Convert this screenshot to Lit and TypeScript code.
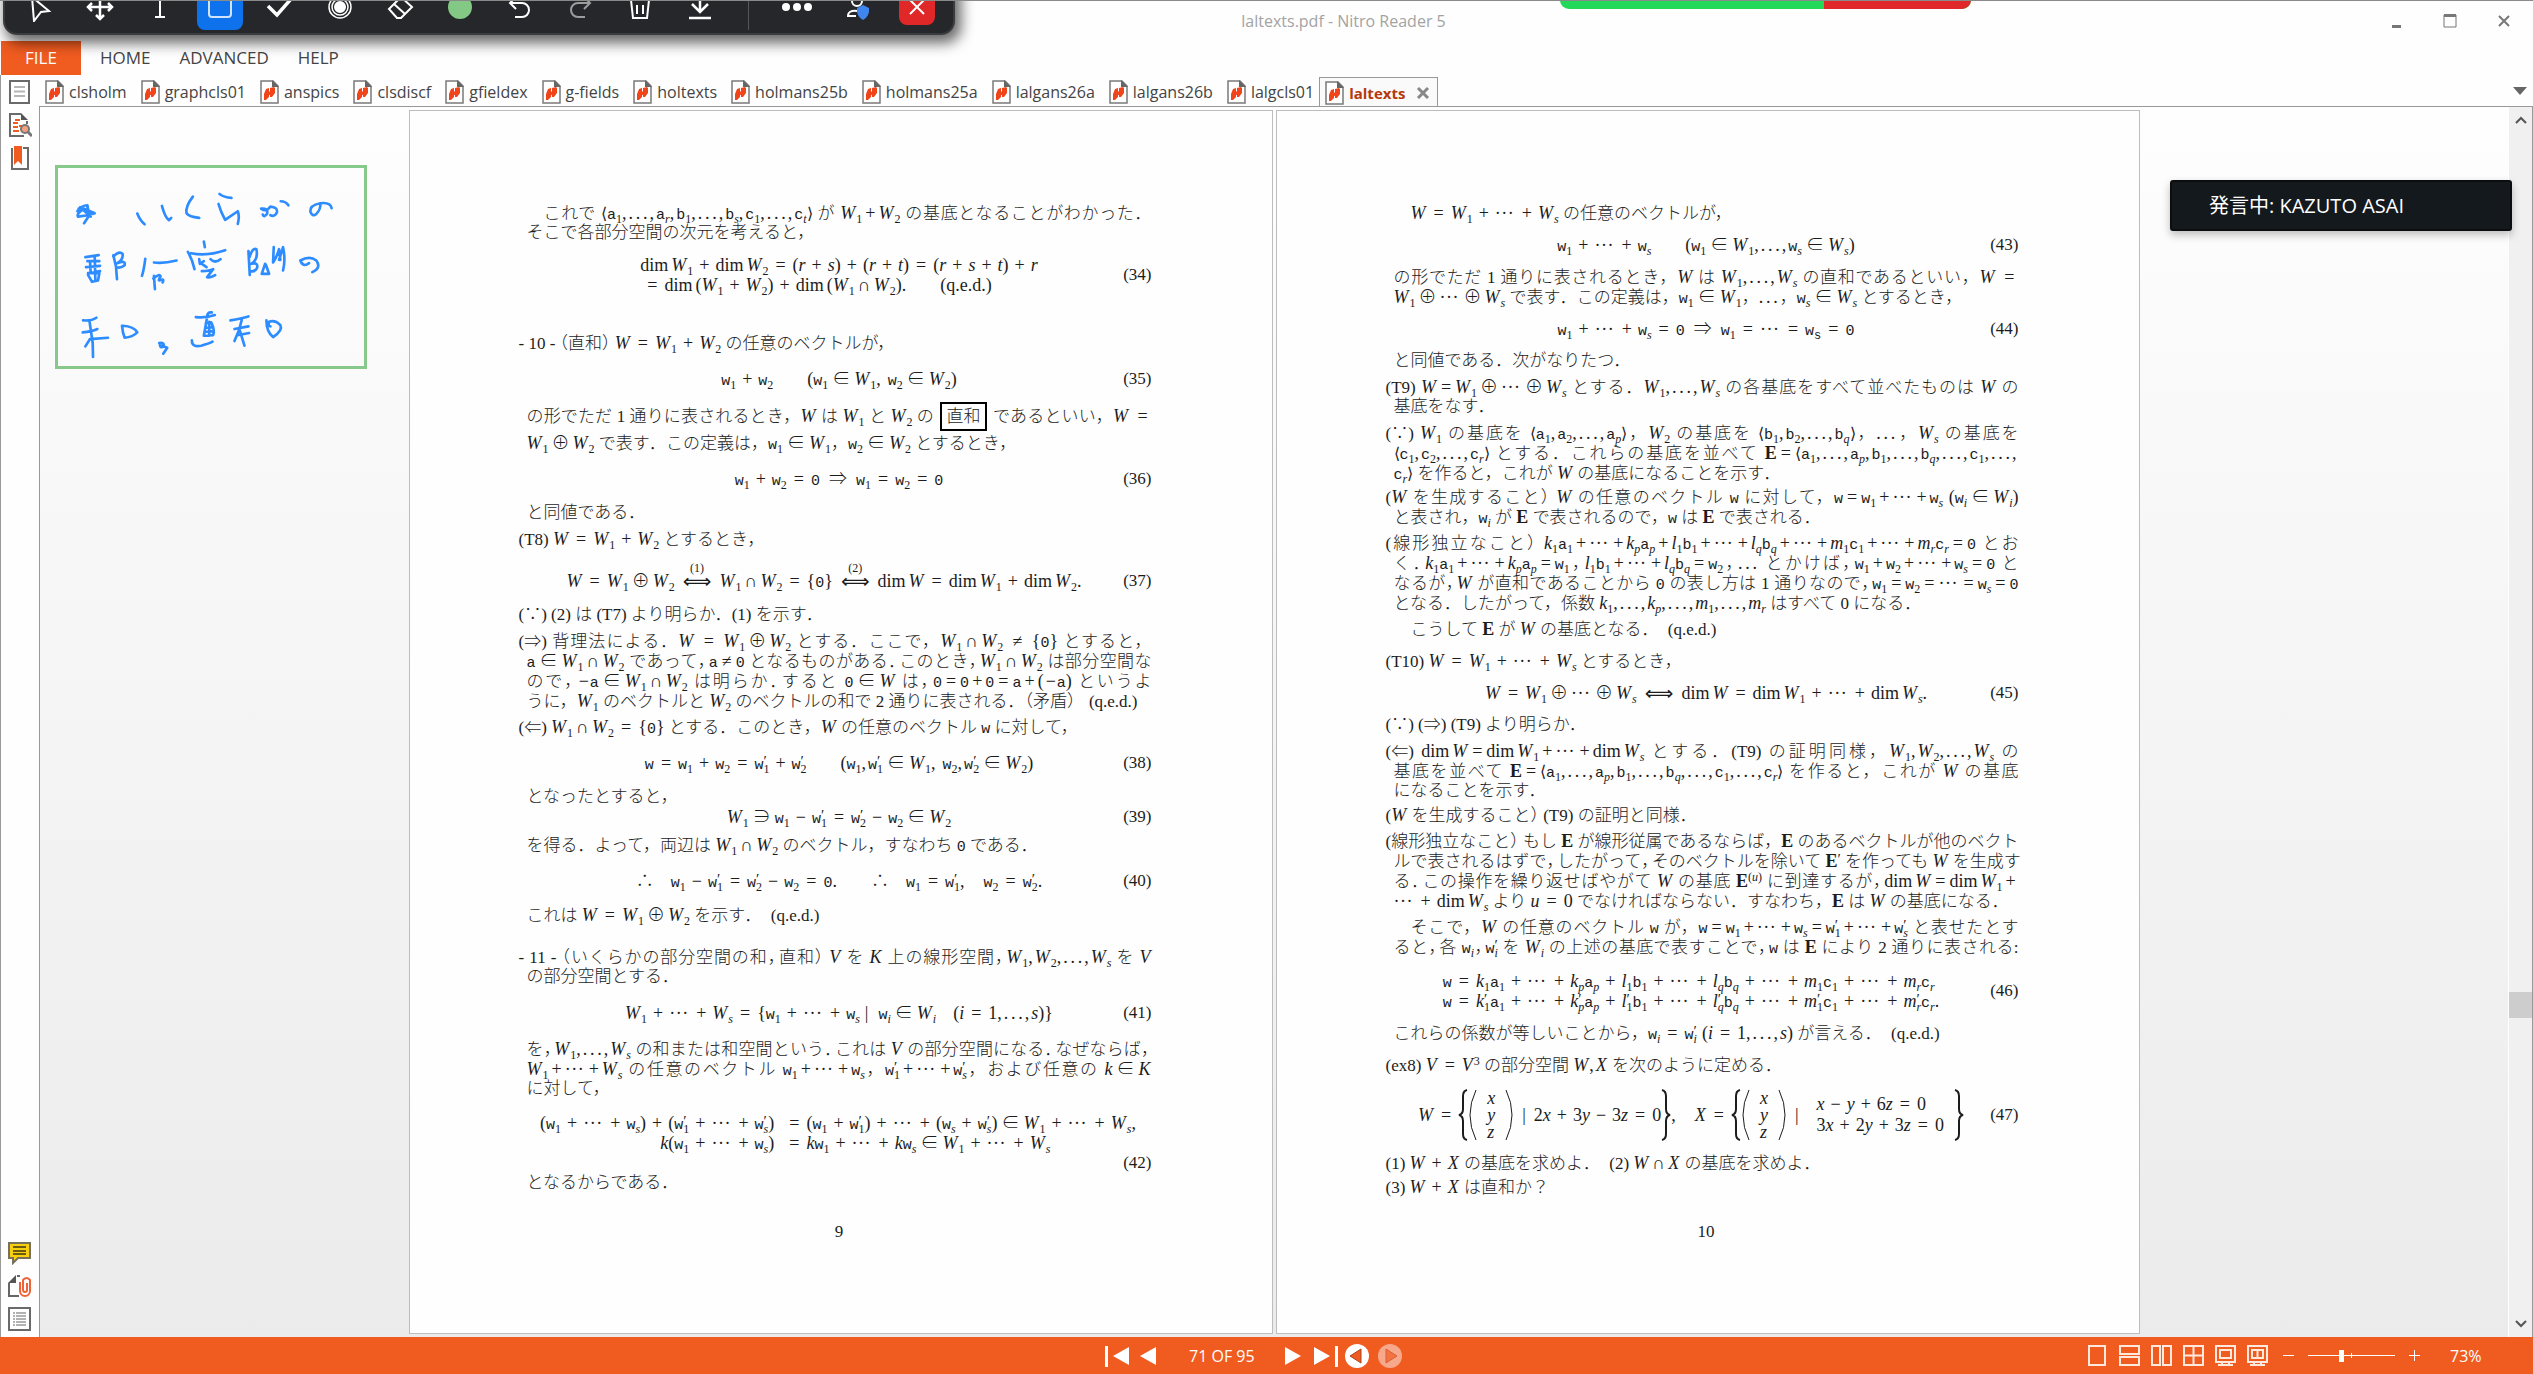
import { LitElement, html, css, svg, TemplateResult } from "lit";
import { customElement } from "lit/decorators.js";
import { classMap } from "lit/directives/class-map.js";

/* ---------- math notation ----------
   Text outside $...$ is plain. Inside: letters are italic variables,
   @x typewriter vector, !x bold set, _x subscript, ^x superscript, ' prime,
   "..." upright text, ~ quad space, ; thin space, < > angle brackets. */

const RELATIONS = "∈∋≠⇒";
const BINARY = "∩⊕";

function readAtom(s: string, i: number): [TemplateResult, number] {
  const c = s[i];
  if (c === "{") {
    const end = s.indexOf("}", i);
    return [html`${math(s.slice(i + 1, end))}`, end + 1];
  }
  if (c === "@") return [html`<span class="tt">${s[i + 1]}</span>`, i + 2];
  if (/[a-zA-Z]/.test(c)) return [html`<i>${c}</i>`, i + 1];
  return [html`${c}`, i + 1];
}

function math(s: string): TemplateResult[] {
  const out: TemplateResult[] = [];
  let i = 0;
  while (i < s.length) {
    const c = s[i];
    if (c === " ") { i++; continue; }
    if (s.startsWith("dim", i)) {
      out.push(html`<span class="fn">dim</span>`);
      i += 3;
    } else if (c === '"') {
      const end = s.indexOf('"', i + 1);
      out.push(html`${s.slice(i + 1, end)}`);
      i = end + 1;
    } else if (c === "@") {
      out.push(html`<span class="tt">${s[i + 1]}</span>`);
      i += 2;
    } else if (c === "!") {
      out.push(html`<b>${s[i + 1]}</b>`);
      i += 2;
    } else if (c === "'") {
      const stacked = s[i + 1] === "_";
      out.push(html`<span class=${stacked ? "prime stacked" : "prime"}>′</span>`);
      i++;
    } else if (c === "_" || c === "^") {
      const [atom, next] = readAtom(s, i + 1);
      out.push(c === "_" ? html`<sub>${atom}</sub>` : html`<sup>${atom}</sup>`);
      i = next;
    } else if (c === "~") {
      out.push(html`<span class="quad"></span>`);
      i++;
    } else if (c === ";") {
      out.push(html`<span class="thin"></span>`);
      i++;
    } else if (c === "⟺") {
      const label = s[i + 1] === "[" ? s.slice(i + 2, s.indexOf("]", i)) : "";
      out.push(html`<span class="iff">${label ? html`<span class="over">${label}</span>` : ""}⟺</span>`);
      i += label ? label.length + 3 : 1;
    } else if (c === "<" || c === ">") {
      out.push(html`<span class="angle">${c === "<" ? "⟨" : "⟩"}</span>`);
      i++;
    } else if (c === "=") {
      out.push(html`<span class="eq">=</span>`);
      i++;
    } else if (c === "+" || c === "−") {
      const unary = c === "−" && (i === 0 || s[i - 1] === "(");
      out.push(html`<span class=${unary ? "unary" : "plus"}>${c}</span>`);
      i++;
    } else if (RELATIONS.includes(c)) {
      out.push(html`<span class="rel">${c}</span>`);
      i++;
    } else if (BINARY.includes(c)) {
      out.push(html`<span class="bin">${c}</span>`);
      i++;
    } else if (c === ",") {
      out.push(html`<span class="comma">,</span>`);
      i++;
    } else if (c === "⋯" || c === "…") {
      const dot = c === "…" ? "." : "·";
      out.push(html`<span class="dots"><span>${dot}</span><span>${dot}</span><span>${dot}</span></span>`);
      i++;
    } else if (/[A-Z]/.test(c)) {
      out.push(html`<i class="cap">${c}</i>`);
      i++;
    } else if (/[a-z]/.test(c)) {
      out.push(html`<i>${c}</i>`);
      i++;
    } else {
      out.push(html`${c}`);
      i++;
    }
  }
  return out;
}

const prose = (s: string, tight: boolean) =>
  s.split(tight ? /([（），．])/ : /([（）])/).map((t) =>
    t === "（" || t === "）" ? html`<span class="half">${t}</span>`
    : tight && (t === "，" || t === "．") ? html`<span class="half stop">${t}</span>`
    : t);

const rich = (s: string, tight = false) =>
  s.split("$").map((part, n) =>
    n % 2
      ? html`<span class="m">${math(part)}</span>`
      : part.split("|").map((t, k) => (k % 2 ? html`<span class="boxed">${t}</span>` : prose(t, tight))),
  );

type Block = {
  gap: number;
  kind?: "hang" | "indent" | "plain";
  loose?: boolean;
  lines?: string[]; // "=" stretches the line to the full measure, "#" also tightens its punctuation
  eq?: string[];
  no?: string;
  shifted?: boolean;
  aligned?: [string, string][];
  sets?: boolean;
};

const PAGE_9: Block[] = [
  { gap: 0, kind: "indent", lines: [
    "=これで $<@a_1,…,@a_r,@b_1,…,@b_s,@c_1,…,@c_t>$ が $W_1+W_2$ の基底となることがわかった．",
    "そこで各部分空間の次元を考えると，"] },
  { gap: 12, eq: ["dimW_1+dimW_2=(r+s)+(r+t)=(r+s+t)+r", "=dim(W_1+W_2)+dim(W_1∩W_2).~~\"(q.e.d.)\""], no: "34" },
  { gap: 38, kind: "hang", lines: ["- 10 - （直和） $W=W_1+W_2$ の任意のベクトルが，"] },
  { gap: 16, eq: ["@w_1+@w_2~~(@w_1∈W_1,;@w_2∈W_2)"], no: "35" },
  { gap: 14, loose: true, lines: [
    "=の形でただ 1 通りに表されるとき，$W$ は $W_1$ と $W_2$ の |直和| であるといい，$W$ $=$",
    "$W_1⊕W_2$ で表す．この定義は，$@w_1∈W_1$，$@w_2∈W_2$ とするとき，"] },
  { gap: 12, eq: ["@w_1+@w_2=@0;⇒;@w_1=@w_2=@0"], no: "36" },
  { gap: 14, lines: ["と同値である．"] },
  { gap: 6, kind: "hang", lines: ["(T8) $W=W_1+W_2$ とするとき，"] },
  { gap: 22, eq: ["W=W_1⊕W_2⟺[(1)]W_1∩W_2={@0}⟺[(2)]dimW=dimW_1+dimW_2."], no: "37", shifted: true },
  { gap: 14, kind: "hang", lines: ["(∵) (2) は (T7) より明らか．(1) を示す．"] },
  { gap: 6, kind: "hang", lines: [
    "=(⇒) 背理法による．$W$ $=$ $W_1⊕W_2$ とする．ここで，$W_1∩W_2$ $≠$ ${@0}$ とすると，",
    "#$@a∈W_1∩W_2$ であって，$@a≠@0$ となるものがある．このとき，$W_1∩W_2$ は部分空間な",
    "#ので，$−@a∈W_1∩W_2$ は明らか．すると $@0∈W$ は，$@0=@0+@0=@a+(−@a)$ というよ",
    "うに，$W_1$ のベクトルと $W_2$ のベクトルの和で 2 通りに表される．（矛盾） $;$ (q.e.d.)"] },
  { gap: 6, kind: "hang", lines: ["(⇐) $W_1∩W_2={@0}$ とする．このとき，$W$ の任意のベクトル $@w$ に対して，"] },
  { gap: 16, eq: ["@w=@w_1+@w_2=@w'_1+@w'_2~~(@w_1,@w'_1∈W_1,;@w_2,@w'_2∈W_2)"], no: "38" },
  { gap: 14, lines: ["となったとすると，"] },
  { gap: 0, eq: ["W_1∋@w_1−@w'_1=@w'_2−@w_2∈W_2"], no: "39" },
  { gap: 8, lines: ["を得る．よって，両辺は $W_1∩W_2$ のベクトル，すなわち $@0$ である．"] },
  { gap: 16, eq: ["∴~@w_1−@w'_1=@w'_2−@w_2=@0.~~∴~@w_1=@w'_1,~@w_2=@w'_2."], no: "40" },
  { gap: 14, lines: ["これは $W=W_1⊕W_2$ を示す． $;$(q.e.d.)"] },
  { gap: 22, kind: "hang", lines: [
    "#- 11 - （いくらかの部分空間の和，直和） $V$ を $K$ 上の線形空間，$W_1,W_2,…,W_s$ を $V$",
    "の部分空間とする．"] },
  { gap: 16, eq: ["W_1+⋯+W_s={@w_1+⋯+@w_s;|;;@w_i∈W_i~(i=1,…,s)}"], no: "41" },
  { gap: 16, lines: [
    "#を，$W_1,…,W_s$ の和または和空間という．これは $V$ の部分空間になる．なぜならば，",
    "=$W_1+⋯+W_s$ の任意のベクトル $@w_1+⋯+@w_s$，$@w'_1+⋯+@w'_s$，および任意の $k∈K$",
    "に対して，"] },
  { gap: 14, no: "42", aligned: [
    ["(@w_1+⋯+@w_s)+(@w'_1+⋯+@w'_s)", "=(@w_1+@w'_1)+⋯+(@w_s+@w'_s)∈W_1+⋯+W_s,"],
    ["k(@w_1+⋯+@w_s)", "=k@w_1+⋯+k@w_s∈W_1+⋯+W_s"]] },
  { gap: 0, lines: ["となるからである．"] },
];

const PAGE_10: Block[] = [
  { gap: 0, kind: "indent", lines: ["$W=W_1+⋯+W_s$ の任意のベクトルが，"] },
  { gap: 12, eq: ["@w_1+⋯+@w_s~~(@w_1∈W_1,…,@w_s∈W_s)"], no: "43" },
  { gap: 12, lines: [
    "=の形でただ 1 通りに表されるとき，$W$ は $W_1,…,W_s$ の直和であるといい，$W$ $=$",
    "$W_1⊕⋯⊕W_s$ で表す．この定義は，$@w_1∈W_1$，$…$，$@w_s∈W_s$ とするとき，"] },
  { gap: 12, eq: ["@w_1+⋯+@w_s=@0;⇒;@w_1=⋯=@w_@s=@0"], no: "44" },
  { gap: 12, lines: ["と同値である．次がなりたつ．"] },
  { gap: 6, kind: "hang", lines: [
    "=(T9) $W=W_1⊕⋯⊕W_s$ とする．$W_1,…,W_s$ の各基底をすべて並べたものは $W$ の",
    "基底をなす．"] },
  { gap: 6, kind: "hang", lines: [
    "=(∵) $W_1$ の基底を $<@a_1,@a_2,…,@a_p>$，$W_2$ の基底を $<@b_1,@b_2,…,@b_q>$，$…$，$W_s$ の基底を",
    "=$<@c_1,@c_2,…,@c_r>$ とする．これらの基底を並べて $!E=<@a_1,…,@a_p,@b_1,…,@b_q,…,@c_1,…,$",
    "$@c_r>$ を作ると，これが $W$ の基底になることを示す．"] },
  { gap: 4, kind: "hang", lines: [
    "=($W$ を生成すること） $W$ の任意のベクトル $@w$ に対して，$@w=@w_1+⋯+@w_s$ $(@w_i∈W_i)$",
    "と表され，$@w_i$ が $!E$ で表されるので，$@w$ は $!E$ で表される．"] },
  { gap: 6, kind: "hang", lines: [
    "=(線形独立なこと） $k_1@a_1+⋯+k_p@a_p+l_1@b_1+⋯+l_q@b_q+⋯+m_1@c_1+⋯+m_r@c_r=@0$ とお",
    "#く．$k_1@a_1+⋯+k_p@a_p=@w_1$，$l_1@b_1+⋯+l_q@b_q=@w_2$，$…$ とかけば，$@w_1+@w_2+⋯+@w_s=@0$ と",
    "#なるが，$W$ が直和であることから $@0$ の表し方は 1 通りなので，$@w_1=@w_2=⋯=@w_s=@0$",
    "となる．したがって，係数 $k_1,…,k_p,…,m_1,…,m_r$ はすべて 0 になる．"] },
  { gap: 6, kind: "indent", lines: ["こうして $!E$ が $W$ の基底となる． $;$(q.e.d.)"] },
  { gap: 12, kind: "hang", lines: ["(T10) $W=W_1+⋯+W_s$ とするとき，"] },
  { gap: 12, eq: ["W=W_1⊕⋯⊕W_s⟺dimW=dimW_1+⋯+dimW_s."], no: "45" },
  { gap: 12, kind: "hang", lines: ["(∵) (⇒) (T9) より明らか．"] },
  { gap: 6, kind: "hang", lines: [
    "=(⇐) $dimW=dimW_1+⋯+dimW_s$ とする．(T9) の証明同様，$W_1,W_2,…,W_s$ の",
    "=基底を並べて $!E=<@a_1,…,@a_p,@b_1,…,@b_q,…,@c_1,…,@c_r>$ を作ると，これが $W$ の基底",
    "になることを示す．"] },
  { gap: 4, kind: "hang", lines: ["($W$ を生成すること） (T9) の証明と同様．"] },
  { gap: 6, kind: "hang", lines: [
    "=(線形独立なこと） もし $!E$ が線形従属であるならば，$!E$ のあるベクトルが他のベクト",
    "#ルで表されるはずで，したがって，そのベクトルを除いて $!E'$ を作っても $W$ を生成す",
    "#る．この操作を繰り返せばやがて $W$ の基底 $!E^{(u)}$ に到達するが，$dimW=dimW_1+$",
    "$⋯+dimW_s$ より $u=0$ でなければならない．すなわち，$!E$ は $W$ の基底になる．"] },
  { gap: 6, kind: "indent", lines: [
    "=そこで，$W$ の任意のベクトル $@w$ が，$@w=@w_1+⋯+@w_s=@w'_1+⋯+@w'_s$ と表せたとす",
    "#ると，各 $@w_i$，$@w'_i$ を $W_i$ の上述の基底で表すことで，$@w$ は $!E$ により 2 通りに表される:"] },
  { gap: 14, shifted: true, eq: [
    "@w=k_1@a_1+⋯+k_p@a_p+l_1@b_1+⋯+l_q@b_q+⋯+m_1@c_1+⋯+m_r@c_r",
    "@w=k'_1@a_1+⋯+k'_p@a_p+l'_1@b_1+⋯+l'_q@b_q+⋯+m'_1@c_1+⋯+m'_r@c_r."], no: "46" },
  { gap: 12, lines: ["これらの係数が等しいことから，$@w_i=@w'_i;(i=1,…,s)$ が言える． $;$(q.e.d.)"] },
  { gap: 12, kind: "hang", lines: ["(ex8) $V=V^3$ の部分空間 $W,X$ を次のように定める．"] },
  { gap: 14, sets: true, no: "47" },
  { gap: 12, kind: "hang", lines: ["(1) $W+X$ の基底を求めよ． $;$(2) $W∩X$ の基底を求めよ．"] },
  { gap: 4, kind: "hang", lines: ["(3) $W+X$ は直和か？"] },
];

const brace = (right = false) => html`<svg class=${classMap({ brace: true, flip: right })} width="10" height="52" viewBox="0 0 10 52" aria-hidden="true">
  <path d="M9 1Q5 2 5 7V20Q5 25 1 26Q5 27 5 32V45Q5 50 9 51" /></svg>`;
const paren = (right = false) => html`<svg class=${classMap({ paren: true, flip: right })} width="9" height="52" viewBox="0 0 9 52" aria-hidden="true">
  <path d="M8 1Q-4 26 8 51" /></svg>`;
const column = html`${paren()}<span class="column"><i>x</i><i>y</i><i>z</i></span>${paren(true)}`;

@customElement("pdf-page")
class PdfPage extends LitElement {
  static properties = { blocks: { attribute: false }, folio: {} };
  declare blocks: Block[];
  declare folio: string;

  static styles = css`
    :host {
      display: flex;
      flex-direction: column;
      flex: 0 1 864px;
      min-width: 0;
      box-sizing: border-box;
      border: 1px solid #bdbdbd;
      background: #fefefe;
      padding: 92px 120px 91px 117px;
      color: #1c1c1c;
      font: 17px/20px "Liberation Serif", "Noto Sans CJK JP", serif;
      font-weight: 300;
      white-space: nowrap;
    }
    .body { flex: 1; }
    .folio { text-align: center; margin: 0; }
    p { margin: 0; }
    b { font-weight: 700; }
    .gap4 { margin-top: 4px; }
    .gap6 { margin-top: 6px; }
    .gap8 { margin-top: 8px; }
    .gap12 { margin-top: 12px; }
    .gap14 { margin-top: 14px; }
    .gap16 { margin-top: 16px; }
    .gap22 { margin-top: 22px; }
    .gap38 { margin-top: 38px; }
    .line { display: block; height: 20px; }
    .loose .line { height: 27px; line-height: 27px; }
    .hang .line:first-child { margin-left: -8px; }
    .indent .line:first-child { margin-left: 17px; }
    .full { text-align: justify; text-align-last: justify; }
    .half { font-feature-settings: "halt"; }
    .stop { margin-right: 2px; }
    .boxed { border: 2px solid #000; padding: 3px 4px; margin: 0 2px; }
    .m { font-size: 18px; }
    .equation { display: grid; grid-template-columns: 1fr auto 1fr; align-items: center; }
    .formula { grid-column: 2; }
    .number { grid-column: 3; text-align: right; }
    .shifted .formula { margin-right: 30px; }
    .shifted .number { margin-left: -30px; }
    .aligned { display: grid; grid-template-columns: auto auto; grid-auto-rows: 20px; justify-content: center; column-gap: 8px; }
    .aligned .lhs { text-align: right; }
    .below { text-align: right; }
    .sets { display: flex; align-items: center; height: 52px; }
    .column { display: flex; flex-direction: column; margin: 0 10px; }
    .column i { line-height: 17px; }
    .system { display: flex; flex-direction: column; line-height: 21px; margin: 0 10px; }
    .bar { margin: 0 8px; }
    svg path { fill: none; stroke: #1c1c1c; stroke-width: 2; }
    .paren path { stroke-width: 1; }
    .flip { transform: scaleX(-1); }
    sub, sup { font-size: 12px; line-height: 0; }
    sub { vertical-align: -4px; }
    sup { vertical-align: 6px; }
    i.cap { margin-right: 1px; }
    .tt { font: 15px/0 "Liberation Mono", monospace; }
    sub .tt { font-size: 12px; }
    .fn { margin-right: 3px; }
    .rel { margin: 0 4px; }
    .eq { margin: 0 7px; }
    .plus { margin: 0 6px; }
    .unary { margin: 0 1px 0 2px; }
    .bin { margin: 0 3px; }
    .full .bin, .full .plus { margin: 0 3px; }
    .full .rel, .full .eq { margin: 0 4px; }
    .comma { margin-right: 2px; }
    .dots { display: inline-flex; width: 19px; justify-content: space-between; line-height: 0; margin-right: 2px; }
    .prime { vertical-align: 3px; line-height: 0; font-size: 15px; }
    .stacked { display: inline-block; width: 0; }
    .quad { display: inline-block; width: 17px; }
    .thin { display: inline-block; width: 5px; }
    .angle { font-family: "DejaVu Sans", sans-serif; line-height: 0; font-size: 16px; }
    .iff { display: inline-block; position: relative; margin: 0 8px; font: 20px/20px "DejaVu Sans", sans-serif; height: 20px; vertical-align: bottom; }
    .over { position: absolute; left: 0; right: 0; top: -9px; text-align: center; font: 12px/12px "Liberation Serif", serif; }
  `;

  private formulaBody(b: Block) {
    if (b.sets) {
      return html`<div class="sets m">
        ${math("W=")}${brace()}${column}<span class="bar">|</span>${math("2x+3y−3z=0")}${brace(true)}${math(",~X=")}${brace()}${column}<span class="bar">|</span>
        <span class="system"><span>${math("x−y+6z=0")}</span><span>${math("3x+2y+3z=0")}</span></span>${brace(true)}
      </div>`;
    }
    return b.eq!.map((l) => html`<span class="line m">${math(l)}</span>`);
  }

  private block(b: Block) {
    const gap = `gap${b.gap}`;
    if (b.aligned) {
      return html`<div class=${gap}>
        <div class="aligned m">${b.aligned.map(([l, r]) => html`<span class="lhs">${math(l)}</span><span>${math(r)}</span>`)}</div>
        <div class="below">(${b.no})</div>
      </div>`;
    }
    if (b.no) {
      return html`<div class=${classMap({ equation: true, [gap]: true, shifted: !!b.shifted || !!b.sets })}>
        <div class="formula">${this.formulaBody(b)}</div>
        <div class="number">(${b.no})</div>
      </div>`;
    }
    return html`<p class=${classMap({ [gap]: true, [b.kind ?? "plain"]: true, loose: !!b.loose })}>${b.lines!.map((l) =>
      l[0] === "=" || l[0] === "#"
        ? html`<span class="line full">${rich(l.slice(1), l[0] === "#")}</span>`
        : html`<span class="line">${rich(l)}</span>`)}</p>`;
  }

  render() {
    return html`<div class="body">${this.blocks.map((b) => this.block(b))}</div>
      <p class="folio">${this.folio}</p>`;
  }
}

/* ---------- handwriting ---------- */
const STROKES = [
  "M232 454Q244 436 262 436L264 466L234 470Q228 462 252 446L284 460M236 446L278 462M262 436L268 466L252 490M240 442L272 470",
  "M412 461Q420 482 434 493M486 438Q496 474 507 481L514 474",
  "M579 410Q556 440 560 460Q566 470 598 474",
  "M659 402Q672 412 695 414M656 432L664 455L676 480L714 454Q720 470 714 492",
  "M784 446Q800 458 812 440Q834 442 832 456Q826 472 812 466M784 446Q806 444 802 462Q792 474 789 464M843 424Q858 424 866 436",
  "M962 430Q930 436 932 455Q938 472 950 462Q964 448 962 430Q992 426 996 445",
  "M256 592L296 586M262 604L298 604M258 622L300 618M270 604L272 640L300 634M264 640L298 640L294 662L276 666L264 645M284 588L286 662",
  "M340 586L348 620L351 658M340 590Q358 572 368 582Q370 600 352 610Q378 600 374 616Q362 626 350 622",
  "M436 597Q432 630 426 648M462 608Q490 612 530 602M462 648L465 688M460 656Q480 640 482 650Q470 666 484 660Q494 658 488 668",
  "M612 545L615 562M564 576Q578 600 584 628M574 580Q620 590 676 571M598 598L600 612L612 604M632 598Q645 612 662 598M606 612L620 622M606 634Q630 634 640 628L622 652Q632 655 646 646",
  "M746 574L750 645M750 590Q758 562 770 568Q776 600 754 612Q776 606 772 624Q765 638 752 634M796 612L786 642L808 642L798 614M822 562L820 608Q832 590 838 568L842 600M838 600L850 562Q858 600 850 632",
  "M902 602Q910 624 928 610M902 602Q930 586 950 602Q966 624 938 637",
  "M249 782Q275 784 289 774M268 782L278 850L279 892M248 818Q275 816 292 808M256 860L270 838L324 834",
  "M366 798Q368 820 374 834Q398 832 412 818Q402 800 368 798",
  "M478 850Q492 846 492 858Q482 868 480 856L502 864L490 882",
  "M588 772Q620 775 645 766M622 768Q624 756 636 758M622 772L612 828L640 826Q646 812 634 788L618 790M618 804L638 802M616 816L638 814M628 786L628 828M576 842Q576 864 604 858Q628 852 638 846",
  "M692 782Q725 776 746 770M726 780L718 810L704 844M704 808L746 800M720 812L734 858M716 826L748 820",
  "M800 782Q800 815 820 832Q850 812 842 796Q826 780 808 786Q804 800 812 800",
];

/* ---------- icons ---------- */
const nitroDoc = html`<svg class="doc" width="19" height="24" viewBox="0 0 19 24" aria-hidden="true">
  <path d="M1 1h12l5 5v17H1z" fill="#fff" stroke="#7a7a7a" stroke-width="1.5" /><path d="M12 0l7 7h-7z" fill="#666" />
  <path d="M6 9L9 8V17L6 20H4V14Z" fill="#f0441a" /><path d="M10 8L14 7L15 8V13L12 17H10Z" fill="#f0441a" /><path d="M8 12L11 11V14L8 16Z" fill="#f0441a" /></svg>`;

const TOOLS: [string, TemplateResult][] = [
  ["Select", svg`<path d="M7 5L24 19L16 20L9 29Z" />`],
  ["Move", svg`<path d="M15 3V27M3 15H27M11 7L15 3L19 7M11 23L15 27L19 23M7 11L3 15L7 19M23 11L27 15L23 19" stroke-width="2.5" />`],
  ["Text", svg`<path d="M9 4H21M15 4V25M10 25H20" />`],
  ["Rectangle", svg`<rect x="4" y="5" width="22" height="20" rx="3" />`],
  ["Stamp", svg`<path d="M3 14L12 23L26 7" stroke-width="3.5" />`],
  ["Spotlight", svg`<circle cx="15" cy="15" r="11" stroke-width="1.5" /><circle cx="15" cy="15" r="8" stroke-width="1.5" /><circle cx="15" cy="15" r="5" fill="#fff" />`],
  ["Eraser", svg`<path d="M4 17L16 5L27 15L16 26H12ZM9 12L20 22" />`],
  ["Colour", svg`<circle cx="15" cy="15" r="12" fill="#83c885" stroke="none" />`],
  ["Undo", svg`<path d="M6 11H17A7 7 0 0 1 17 25H10M11 5L5 11L11 17" />`],
  ["Redo", svg`<path d="M24 11H13A7 7 0 0 0 13 25H20M19 5L25 11L19 17" opacity=".55" />`],
  ["Clear", svg`<path d="M4 8H26M10 8V4H20V8M6 8L8 26H22L24 8M12 13V22M18 13V22" />`],
  ["Save", svg`<path d="M15 2V20M7 12L15 20L23 12M4 26H26" stroke-width="2.5" />`],
];
const MORE_TOOLS: [string, TemplateResult][] = [
  ["More", svg`<g fill="#fff" stroke="none"><circle cx="4" cy="15" r="4" /><circle cx="15" cy="15" r="4" /><circle cx="26" cy="15" r="4" /></g>`],
  ["Who can annotate", svg`<circle cx="15" cy="9" r="5" /><path d="M15 19Q6 18 6 24H14" /><path d="M21 13L27 16Q28 24 21 28Q14 24 15 16Z" fill="#3f86ee" stroke="none" />`],
];

const VIEWS: [string, TemplateResult][] = [
  ["Single page", svg`<rect x="3" y="2" width="16" height="19" />`],
  ["Continuous", svg`<path d="M2 2H21V10H2ZM2 13H21V21H2Z" />`],
  ["Two pages", svg`<path d="M2 2H10V21H2ZM13 2H21V21H13Z" />`],
  ["Two pages continuous", svg`<path d="M2 2H21V21H2ZM11.500 2V21M2 11.500H21" />`],
  ["Full screen", svg`<path d="M2 2H21V18H2ZM6 6H17V14H6ZM4 21H19M8 18V21M15 18V21" />`],
  ["Full screen two pages", svg`<path d="M2 2H21V18H2ZM6 6H17V14H6ZM11.500 6V14M4 21H19M8 18V21M15 18V21" />`],
];

const TABS = ["clsholm", "graphcls01", "anspics", "clsdiscf", "gfieldex", "g-fields", "holtexts",
  "holmans25b", "holmans25a", "lalgans26a", "lalgans26b", "lalgcls01"];

@customElement("app-root")
class AppRoot extends LitElement {
  static styles = css`
    :host {
      display: grid;
      grid-template-rows: auto 1fr auto;
      min-height: 100vh;
      position: relative;
      overflow: hidden;
      box-sizing: border-box;
      border-top: 1px solid #8a8a8a;
      background: #fefefe;
      font: 16px/20px "Open Sans", "Noto Sans CJK JP", sans-serif;
      color: #444;
    }
    button { border: 0; padding: 0; background: none; font: inherit; color: inherit; display: flex; align-items: center; justify-content: center; }
    svg { display: block; flex: none; }
    .title-bar { display: grid; grid-template-columns: 1fr auto 1fr; align-items: center; height: 40px; }
    .title { grid-column: 2; font-size: 16px; color: #a3a3a3; margin: 0; padding-left: 154px; font-weight: 400; }
    .window-buttons { display: flex; justify-content: flex-end; gap: 34px; padding-right: 19px; }
    .menu { display: flex; align-items: center; height: 34px; font-size: 17px; padding-left: 1px; }
    .menu a { color: #444; text-decoration: none; margin-right: 29px; }
    .menu .file { background: #f05b20; color: #fff; width: 80px; line-height: 34px; text-align: center; margin-right: 19px; }
    .work { display: grid; grid-template-columns: 39px minmax(0, 1fr); }
    .side { display: flex; flex-direction: column; align-items: center; gap: 9px; padding: 5px 0 6px; border-left: 1px solid #9a9a9a; }
    .spring { flex: 1; }
    .main { display: flex; flex-direction: column; }
    .tabs { display: flex; align-items: flex-end; height: 31px; padding: 0 6px; }
    .tab { gap: 5px; height: 28px; margin-right: 14px; color: #444; box-sizing: border-box; }
    .tab.active { border: 1px solid #999; border-bottom: 0; background: #fafafa; color: #b5390d; font-weight: 700; font-size: 15px; height: 30px; padding: 0 7px 0 5px; margin: 0 0 -1px -9px; position: relative; }
    .tab .close { margin-left: 6px; }
    .tab-list { margin-left: auto; height: 29px; }
    .view { flex: 1; display: grid; grid-template-columns: minmax(0, 1fr) 24px; border: 1px solid #999; border-width: 1px 1px 0 1px; position: relative; }
    .canvas { display: flex; justify-content: center; gap: 3px; padding: 3px 0; background: linear-gradient(#fefefe, #ebebeb); }
    .scroll { display: flex; flex-direction: column; align-items: center; justify-content: space-between; background: #f0f0f0; padding: 9px 0; border-left: 1px solid #fff; }
    .track { flex: 1; width: 100%; display: grid; grid-template-rows: 868fr 26px 302fr; }
    .thumb { grid-row: 2; background: #cdcdcd; }
    .status { display: grid; grid-template-columns: 1fr auto 1fr; align-items: center; height: 37px; background: #f05b20; color: #fff; padding-right: 18px; }
    .nav { grid-column: 2; display: flex; align-items: center; }
    .nav button { margin-right: 9px; }
    .nav .next { margin-right: 12px; }
    .nav .last { margin-right: 7px; }
    .count { margin: 0 30px 0 23px; width: 65px; white-space: nowrap; }
    .tools { grid-column: 3; display: flex; align-items: center; justify-content: flex-end; gap: 9px; padding-right: 30px; }
    .tools svg { fill: none; stroke: #ffe9dd; stroke-width: 2; }
    .tools .step { margin: 0 5px; }
    .tools .step svg { stroke: #fff; stroke-width: 1; }
    .zoom { appearance: none; width: 87px; height: 14px; margin: 0; background: linear-gradient(#fff, #fff) 0 50% / 100% 1px no-repeat, linear-gradient(#fff, #fff) 50% 50% / 1px 5px no-repeat; }
    .zoom::-webkit-slider-thumb { appearance: none; width: 5px; height: 12px; background: #fff; }
    .percent { margin-left: 16px; width: 35px; }

    .annotator { position: absolute; left: 3px; top: -23px; width: 952px; height: 57px; box-sizing: border-box; border: 2px solid #3a3c40; border-radius: 14px; background: #26272b; box-shadow: 4px 6px 14px 2px rgba(0, 0, 0, 0.6); display: flex; align-items: center; padding-left: 5px; z-index: 2; }
    .annotator button { width: 60px; height: 46px; flex: none; }
    .annotator svg { fill: none; stroke: #fff; stroke-width: 2; }
    .annotator .on svg { box-sizing: content-box; padding: 8px; background: #0e72ed; border-radius: 8px; }
    .annotator .on path, .annotator .on rect { stroke: #cfe3ff; }
    .divider { width: 1px; height: 46px; background: #55565a; margin: 0 18px; flex: none; }
    .annotator .exit span { width: 36px; height: 36px; border-radius: 8px; background: #e02828; display: flex; align-items: center; justify-content: center; }
    .share { position: absolute; left: 1560px; top: -1px; width: 411px; height: 9px; display: flex; border-radius: 0 0 9px 9px; overflow: hidden; background: #23d959; }
    .share span { margin-left: auto; width: 147px; background: #e02828; }
    .note { position: absolute; left: 15px; top: 58px; width: 312px; height: 204px; box-sizing: border-box; border: 3px solid #86c98a; }
    .note svg { margin: -3px; }
    .note path { fill: none; stroke: #2d8cff; stroke-width: 8; stroke-linecap: round; stroke-linejoin: round; }
    .speaker { position: absolute; right: 20px; top: 73px; width: 342px; height: 51px; box-sizing: border-box; padding-left: 37px; line-height: 47px; border: 2px solid #0b0d0f; border-radius: 3px; background: #14191d; color: #fff; font-size: 20px; box-shadow: 0 4px 8px rgba(0, 0, 0, 0.25); margin: 0; }
  `;

  private tool([label, art]: [string, TemplateResult]) {
    return html`<button class=${label === "Rectangle" ? "on" : ""} aria-label=${label}><svg width="30" height="30" viewBox="0 0 30 30">${art}</svg></button>`;
  }

  render() {
    return html`
      <header>
        <div class="title-bar">
          <h1 class="title">laltexts.pdf - Nitro Reader 5</h1>
          <div class="window-buttons">
            <button aria-label="Minimize"><svg width="20" height="16"><path d="M6 12h9v3H6z" fill="#777" /></svg></button>
            <button aria-label="Maximize"><svg width="20" height="16"><path d="M4 2h12v12H4z" fill="none" stroke="#777" /><path d="M4 1h12v3H4z" fill="#777" /></svg></button>
            <button aria-label="Close"><svg width="20" height="16"><path d="M5 3L15 13M15 3L5 13" stroke="#777" stroke-width="2" /></svg></button>
          </div>
        </div>
        <nav class="menu">
          <a class="file" href="#file">FILE</a><a href="#home">HOME</a><a href="#advanced">ADVANCED</a><a href="#help">HELP</a>
        </nav>
      </header>

      <div class="work">
        <aside class="side">
          <button aria-label="Pages"><svg width="24" height="24" viewBox="0 0 24 24"><path d="M2 1h19v22H2z" fill="#fff" stroke="#6a6a6a" stroke-width="2" /><path d="M6 7h11M6 11.500h11M6 16h11" stroke="#b5b5b5" stroke-width="2" /></svg></button>
          <button aria-label="Search"><svg width="24" height="24" viewBox="0 0 24 24"><path d="M13 1H2v22h14M19 11V8" fill="none" stroke="#6a6a6a" stroke-width="2" /><path d="M13 0l7 7h-7z" fill="#555" /><path d="M7 7h5M5 10h5M11 13h3M5 14h5M5 18h6" stroke="#f05b20" stroke-width="2" /><circle cx="17" cy="16" r="4" fill="#f3a182" stroke="#777" stroke-width="2" /><path d="M20 19l4 4" stroke="#777" stroke-width="3" /></svg></button>
          <button aria-label="Bookmarks"><svg width="24" height="24" viewBox="0 0 24 24"><path d="M4 2v21h16V2h-5" fill="none" stroke="#6a6a6a" stroke-width="2" /><path d="M6 0h8v19l-4-4-4 4z" fill="#f05b20" /></svg></button>
          <span class="spring"></span>
          <button aria-label="Comments"><svg width="24" height="24" viewBox="0 0 24 24"><path d="M1 2h21v15H10l-5 5v-5H1z" fill="#f7ce10" stroke="#77715a" stroke-width="2" /><path d="M5 6h13M5 10h13M5 13h13" stroke="#6b5c10" stroke-width="2" /></svg></button>
          <button aria-label="Attachments"><svg width="24" height="24" viewBox="0 0 24 24"><path d="M9 2h3M1 9v13h10" fill="none" stroke="#666" stroke-width="2" /><path d="M8 1v8H0z" fill="#555" /><path d="M19 9v7a2 2 0 0 1-4 0V6a4 4 0 0 1 7 0v11a5 5 0 0 1-10 0V8" fill="none" stroke="#ee6438" stroke-width="2" /></svg></button>
          <button aria-label="Layers"><svg width="24" height="24" viewBox="0 0 24 24"><path d="M1 1h21v22H1z" fill="#fff" stroke="#6a6a6a" stroke-width="2" /><path d="M8 6h10M8 9h10M8 12h10M8 15h10M8 18h10" stroke="#666" /><path d="M5 6h2M5 9h2M5 12h2M5 15h2M5 18h2" stroke="#666" /></svg></button>
        </aside>
        <div class="main">
          <div class="tabs">
            ${TABS.map((t) => html`<button class="tab">${nitroDoc}<span>${t}</span></button>`)}
            <button class="tab active">${nitroDoc}<span>laltexts</span><svg class="close" width="14" height="14"><path d="M2 2L12 12M12 2L2 12" stroke="#888" stroke-width="3" /></svg></button>
            <button class="tab-list" aria-label="All documents"><svg width="14" height="9"><path d="M0 0h14l-7 8z" fill="#666" /></svg></button>
          </div>
          <div class="view">
            <main class="canvas">
              <pdf-page .blocks=${PAGE_9} folio="9"></pdf-page>
              <pdf-page .blocks=${PAGE_10} folio="10"></pdf-page>
            </main>
            <div class="scroll">
              <svg width="12" height="8"><path d="M1 7l5-5 5 5" fill="none" stroke="#555" stroke-width="2" /></svg>
              <div class="track"><div class="thumb"></div></div>
              <svg width="12" height="8"><path d="M1 1l5 5 5-5" fill="none" stroke="#555" stroke-width="2" /></svg>
            </div>
            <div class="note"><svg width="312" height="204" viewBox="165 315 937 613" role="img" aria-label="Handwritten note">${STROKES.map((d) => svg`<path d=${d} />`)}</svg></div>
            <p class="speaker">発言中: KAZUTO ASAI</p>
          </div>
        </div>
      </div>

      <footer class="status">
        <div class="nav">
          <button aria-label="First page"><svg width="26" height="24" fill="#fff"><path d="M1 2h3v21H1zM9 12L25 3v18z" /></svg></button>
          <button aria-label="Previous page"><svg width="18" height="24" fill="#fff"><path d="M1 12L17 3v18z" /></svg></button>
          <span class="count">71 OF 95</span>
          <button class="next" aria-label="Next page"><svg width="17" height="24" fill="#fff"><path d="M17 12L1 3v18z" /></svg></button>
          <button class="last" aria-label="Last page"><svg width="25" height="24" fill="#fff"><path d="M17 12L1 3v18zM22 2h3v21h-3z" /></svg></button>
          <button aria-label="Back"><svg width="24" height="24"><circle cx="12" cy="12" r="12" fill="#fff" /><path d="M5 12L16 5v14z" fill="#f05b20" stroke="#a8451e" /></svg></button>
          <button aria-label="Forward"><svg width="24" height="24"><circle cx="12" cy="12" r="12" fill="#f7a88a" /><path d="M19 12L8 5v14z" fill="#f2733f" stroke="#d9603a" /></svg></button>
        </div>
        <div class="tools">
          ${VIEWS.map(([l, a]) => html`<button aria-label=${l}><svg width="23" height="23">${a}</svg></button>`)}
          <button class="step" aria-label="Zoom out"><svg width="11" height="11"><path d="M0 5.500h11" /></svg></button>
          <input class="zoom" type="range" aria-label="Zoom" min="0" max="100" value="38" />
          <button class="step" aria-label="Zoom in"><svg width="11" height="11"><path d="M0 5.500h11M5.500 0v11" /></svg></button>
          <span class="percent">73%</span>
        </div>
      </footer>

      <div class="annotator" role="toolbar" aria-label="Annotation tools">
        ${TOOLS.map((t) => this.tool(t))}
        <span class="divider"></span>
        ${MORE_TOOLS.map((t) => this.tool(t))}
        <button class="exit" aria-label="Close toolbar"><span><svg width="20" height="20"><path d="M3 3L17 17M17 3L3 17" /></svg></span></button>
      </div>
      <div class="share"><span></span></div>
    `;
  }
}
